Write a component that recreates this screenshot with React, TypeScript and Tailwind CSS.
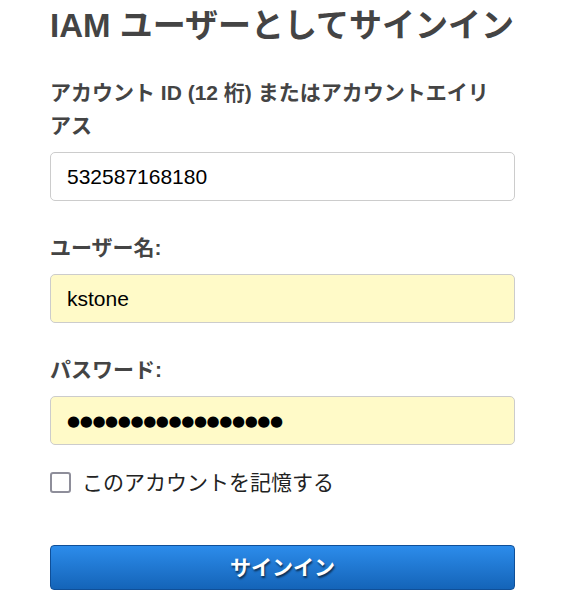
import { useState } from "react";

const jp = "font-['Liberation_Sans','Noto_Sans_CJK_JP',sans-serif]";

const App: React.FC = () => {
  const [remember, setRemember] = useState<boolean>(false);

  return (
    <div className={`min-h-screen bg-white ${jp}`}>
      <div className="w-[465px] ml-[50px] pt-[6px]">
        <h1 className="text-[33px] leading-[40px] font-bold text-[#444] whitespace-nowrap">IAM ユーザーとしてサインイン</h1>

        <form className="mt-[30px]" onSubmit={(e) => e.preventDefault()}>
          <label className="block w-[445px] text-[21px] leading-[33px] font-bold text-[#444]">
            アカウント ID (12 桁) またはアカウントエイリアス
          </label>
          <input
            defaultValue="532587168180"
            className="mt-[10px] block w-full h-[49px] px-[16px] text-[21px] text-black bg-white border border-[#ccc] rounded-[5px] outline-none"
          />

          <label className="block mt-[30px] text-[21px] leading-[33px] font-bold text-[#444]">ユーザー名:</label>
          <input
            defaultValue="kstone"
            className="mt-[10px] block w-full h-[49px] px-[16px] text-[21px] text-black bg-[#fffac8] border border-[#ccc] rounded-[5px] outline-none"
          />

          <label className="block mt-[30px] text-[21px] leading-[33px] font-bold text-[#444]">パスワード:</label>
          {/* masked value drawn with round bullets */}
          <input
            defaultValue="●●●●●●●●●●●●●●●●●"
            className="mt-[10px] block w-full h-[49px] pl-[16px] pr-[16px] text-[15px] tracking-[-0.4px] text-black bg-[#fffac8] border border-[#ccc] rounded-[5px] outline-none font-['DejaVu_Sans',sans-serif]"
          />

          <label className="mt-[27px] h-[21px] flex items-center gap-[11px] cursor-pointer">
            <input
              type="checkbox"
              checked={remember}
              onChange={(e) => setRemember(e.target.checked)}
              className="appearance-none shrink-0 w-[21px] h-[21px] border-2 border-[#8e8e9a] rounded-[3px] bg-white"
            />
            <span className="text-[21px] leading-[21px] text-[#222]">このアカウントを記憶する</span>
          </label>

          <button
            type="submit"
            className="mt-[52px] block w-full h-[45px] rounded-[4px] border border-[#0f4f98] bg-gradient-to-b from-[#2c8ceb] to-[#1464b8] text-white text-[21px] font-bold [text-shadow:1px_2px_2px_rgba(0,0,0,0.6)]"
          >
            サインイン
          </button>
        </form>
      </div>
    </div>
  );
};

export default App;
